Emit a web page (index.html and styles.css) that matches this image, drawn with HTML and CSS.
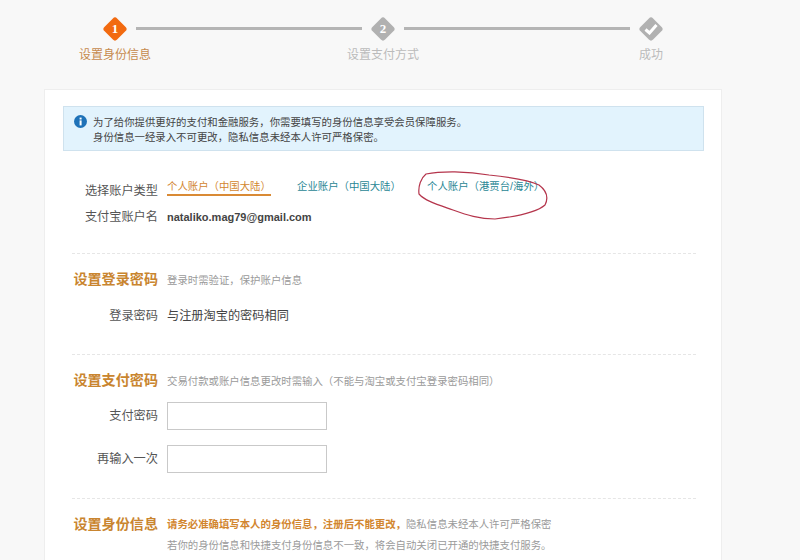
FILE: index.html
```html
<!DOCTYPE html>
<html lang="zh-CN">
<head>
    <meta charset="UTF-8">
    <title>设置身份信息</title>
    <link rel="stylesheet" href="styles.css">
</head>
<body>
    <div class="steps">
        <div class="step step-on">
            <span class="mark"><b>1</b></span>
            <span class="step-name">设置身份信息</span>
        </div>
        <div class="step-line"></div>
        <div class="step">
            <span class="mark"><b>2</b></span>
            <span class="step-name">设置支付方式</span>
        </div>
        <div class="step-line"></div>
        <div class="step">
            <span class="mark">
                <svg class="check" width="14" height="12" viewBox="0 0 14 12"><path d="M1.5 6.5 5.5 10 12.5 2" fill="none" stroke="#fff" stroke-width="3"/></svg>
            </span>
            <span class="step-name">成功</span>
        </div>
    </div>

    <div class="card">
        <div class="notice">
            <svg class="info" width="13" height="13" viewBox="0 0 13 13">
                <circle cx="6.5" cy="6.5" r="6.5" fill="#1f72b8"/>
                <rect x="5.6" y="5.4" width="2" height="5" fill="#fff"/>
                <rect x="5.6" y="2.6" width="2" height="1.9" fill="#fff"/>
            </svg>
            <p>为了给你提供更好的支付和金融服务，你需要填写的身份信息享受会员保障服务。<br>身份信息一经录入不可更改，隐私信息未经本人许可严格保密。</p>
        </div>

        <div class="row row-type">
            <span class="label">选择账户类型</span>
            <div class="tabs">
                <a class="tab tab-on">个人账户（中国大陆）</a>
                <a class="tab tab-biz">企业账户（中国大陆）</a>
                <a class="tab tab-abroad">个人账户（港贾台/海外）</a>
            </div>
            <svg class="circled" width="136" height="52" viewBox="0 0 136 52">
                <path d="M9 4C24 1 50 1 72 5C92 7 112 10 122 15C130 21 132 27 128 35C120 42 104 46 78 49C62 49 50 45 36 40C22 35 8 31 2 24C1 16 4 8 9 4Z" fill="none" stroke="#b5354c" stroke-width="1.2"/>
            </svg>
        </div>
        <div class="row row-mail">
            <span class="label">支付宝账户名</span>
            <span class="email">nataliko.mag79@gmail.com</span>
        </div>

        <div class="section section-login">
            <div class="row">
                <h2 class="label">设置登录密码</h2>
                <span class="hint">登录时需验证，保护账户信息</span>
            </div>
            <div class="row row-same">
                <span class="label">登录密码</span>
                <span class="same">与注册淘宝的密码相同</span>
            </div>
        </div>

        <div class="section section-pay">
            <div class="row">
                <h2 class="label">设置支付密码</h2>
                <span class="hint">交易付款或账户信息更改时需输入（不能与淘宝或支付宝登录密码相同）</span>
            </div>
            <div class="row row-input row-first">
                <span class="label">支付密码</span>
                <input type="password">
            </div>
            <div class="row row-input">
                <span class="label">再输入一次</span>
                <input type="password">
            </div>
        </div>

        <div class="section section-id">
            <div class="row">
                <h2 class="label">设置身份信息</h2>
                <p class="hint"><strong>请务必准确填写本人的身份信息，注册后不能更改，</strong>隐私信息未经本人许可严格保密<br>若你的身份信息和快捷支付身份信息不一致，将会自动关闭已开通的快捷支付服务。</p>
            </div>
        </div>
    </div>
</body>
</html>
```

FILE: styles.css
```css
html, body {
    height: 560px;
    overflow: hidden;
}
body {
    margin: 0;
    background: #f8f8f8;
    color: #555;
    font-family: "Liberation Sans", "Noto Sans CJK SC", sans-serif;
}

/* steps */
.steps {
    display: flex;
    padding: 16px 0 0 79px;
    height: 89px;
    box-sizing: border-box;
}
.step {
    width: 72px;
    flex: none;
    display: flex;
    flex-direction: column;
    align-items: center;
}
.mark {
    position: relative;
    width: 26px;
    height: 26px;
    display: flex;
    align-items: center;
    justify-content: center;
}
.mark::before {
    content: "";
    position: absolute;
    left: 4px;
    top: 4px;
    width: 18px;
    height: 18px;
    border-radius: 3px;
    background: #b1b1b1;
    transform: rotate(45deg);
}
.step-on .mark::before {
    background: #f26a10;
}
.mark b, .check {
    position: relative;
}
.mark b {
    color: #fff;
    font: bold 13px "Liberation Serif", serif;
}
.step-name {
    margin-top: 5px;
    font-size: 12px;
    line-height: 16px;
    color: #bbb;
}
.step-on .step-name {
    color: #c68a4e;
}
.step-line {
    width: 226px;
    height: 3px;
    flex: none;
    margin: 11px -15px 0;
    background: #b5b5b5;
}

/* card */
.card {
    width: 678px;
    height: 480px;
    padding: 16px 17px 0 18px;
    margin-left: 44px;
    box-sizing: border-box;
    background: #fff;
    border: 1px solid #eee;
}
.notice {
    display: flex;
    gap: 6px;
    width: 641px;
    height: 45px;
    padding: 8px 10px 0;
    box-sizing: border-box;
    background: #e2f3fd;
    border: 1px solid #cfe2ee;
    font-size: 10.4px;
    line-height: 15px;
    color: #444;
}
.notice p {
    margin: 0;
}
.info {
    flex: none;
}

/* rows */
.row {
    display: flex;
    gap: 9px;
    position: relative;
}
.label {
    width: 95px;
    flex: none;
    margin: 0;
    text-align: right;
    font-size: 12.2px;
    font-weight: normal;
    line-height: 18px;
    color: #555;
}
.row-type {
    margin-top: 28px;
    height: 24px;
}
.row-type .label {
    margin-top: 3px;
}
.tabs {
    display: flex;
    font-size: 10.4px;
    line-height: 16px;
}
.tab {
    color: #2a8795;
    height: 16px;
}
.tab-on {
    width: 104px;
    height: 15px;
    margin-right: 26px;
    color: #d2862f;
    border-bottom: 2px solid #d98a35;
}
.tab-biz {
    width: 130px;
}
.circled {
    position: absolute;
    left: 354px;
    top: -9px;
}
.row-mail {
    margin-top: 5px;
}
.email {
    font-size: 11px;
    font-weight: bold;
    line-height: 18px;
    color: #444;
}

/* sections */
.section {
    margin: 0 8px 0 9px;
    border-top: 1px dashed #e6e6e6;
}
.section .label {
    width: 86px;
}
.section h2.label {
    font-size: 14.1px;
    font-weight: bold;
    color: #c9852f;
}
.hint {
    margin: 0;
    font-size: 10.4px;
    line-height: 21px;
    color: #9a9a9a;
}
.hint strong {
    color: #d2862f;
}
.section-login {
    margin-top: 27px;
    height: 84px;
    padding-top: 16px;
}
.row-same {
    margin-top: 16px;
}
.same {
    font-size: 12.2px;
    line-height: 18px;
    color: #444;
}
.section-pay {
    height: 127px;
    padding-top: 16px;
}
.row-input {
    align-items: center;
    margin-top: 15px;
}
.row-first {
    margin-top: 10px;
}
.row-input input {
    width: 160px;
    height: 28px;
    margin: 0;
    padding: 0;
    box-sizing: border-box;
    background: #fff;
    border: 1px solid #c9c9c9;
}
.section-id {
    padding-top: 15px;
}
.section-id .label {
    margin-top: 1px;
}
```
